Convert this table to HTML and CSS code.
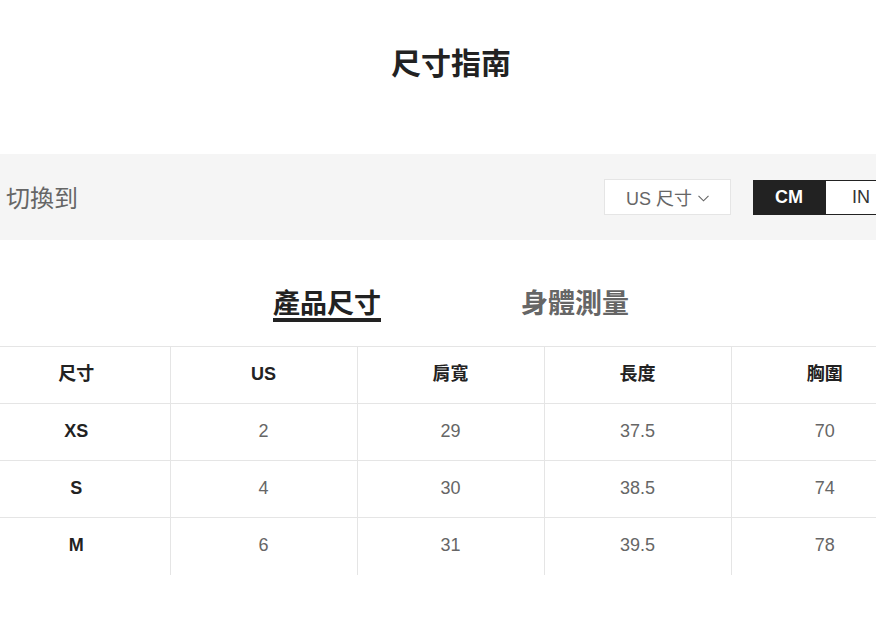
FILE: index.html
```html
<!DOCTYPE html>
<html lang="zh-Hant">
<head>
<meta charset="utf-8">
<title>尺寸指南</title>
<link rel="stylesheet" href="styles.css">
</head>
<body>
<div class="page">
  <h1 class="title">尺寸指南</h1>
  <div class="switch-bar">
    <span class="switch-label">切換到</span>
    <div class="switch-controls">
      <div class="dropdown">US 尺寸<svg class="chev" width="11" height="7" viewBox="0 0 11 7"><path d="M0.5 0.8 L5.5 5.8 L10.5 0.8" fill="none" stroke="#666" stroke-width="1.1"/></svg></div>
      <div class="units">
        <span class="unit active">CM</span>
        <span class="unit">IN</span>
      </div>
    </div>
  </div>
  <div class="tabs">
    <span class="tab active">產品尺寸</span>
    <span class="tab">身體測量</span>
  </div>
  <table class="size-table">
    <thead>
      <tr><th>尺寸</th><th>US</th><th>肩寬</th><th>長度</th><th>胸圍</th></tr>
    </thead>
    <tbody>
      <tr><td>XS</td><td>2</td><td>29</td><td>37.5</td><td>70</td></tr>
      <tr><td>S</td><td>4</td><td>30</td><td>38.5</td><td>74</td></tr>
      <tr><td>M</td><td>6</td><td>31</td><td>39.5</td><td>78</td></tr>
    </tbody>
  </table>
</div>
</body>
</html>
```
FILE: styles.css
```css
html, body {
  margin: 0;
  padding: 0;
  background: #fff;
  overflow: hidden;
}
body {
  font-family: "Liberation Sans", "Noto Sans CJK TC", Arial, sans-serif;
  color: #222;
}
.page {
  width: 902px;
}
.title {
  margin: 0;
  padding-top: 41px;
  font-family: "Noto Sans CJK TC", sans-serif;
  font-size: 30px;
  line-height: 40px;
  font-weight: 700;
  text-align: center;
  color: #222;
}
.switch-bar {
  margin-top: 73px;
  height: 86px;
  background: #f5f5f5;
  display: flex;
  align-items: center;
  justify-content: space-between;
  padding: 0 5px 0 6px;
}
.switch-label {
  font-family: "Noto Sans CJK TC", sans-serif;
  font-size: 24px;
  color: #666;
  line-height: 30px;
}
.switch-controls {
  display: flex;
  align-items: center;
  gap: 22px;
}
.dropdown {
  box-sizing: border-box;
  width: 127px;
  height: 36px;
  background: #fff;
  border: 1px solid #e5e5e5;
  display: flex;
  align-items: center;
  justify-content: center;
  gap: 6px;
  font-size: 18px;
  color: #666;
  font-family: "Liberation Sans", "Noto Sans CJK TC", sans-serif;
}
.chev {
  margin-top: 3px;
}
.units {
  display: flex;
}
.unit {
  box-sizing: border-box;
  width: 72px;
  height: 35px;
  display: flex;
  align-items: center;
  justify-content: center;
  font-size: 18px;
  color: #333;
  background: #fff;
  border: 1px solid #222;
}
.unit.active {
  background: #222;
  color: #fff;
  font-weight: 700;
}
.tabs {
  margin-top: 46px;
  display: flex;
  justify-content: center;
  gap: 140px;
}
.tab {
  font-family: "Noto Sans CJK TC", sans-serif;
  font-size: 27px;
  font-weight: 700;
  line-height: 32px;
  color: #666;
  border-bottom: 4px solid transparent;
}
.tab.active {
  color: #222;
  border-bottom-color: #222;
}
.size-table {
  margin-top: 24px;
  margin-left: -17px;
  width: 935px;
  border-collapse: collapse;
  table-layout: fixed;
}
.size-table th,
.size-table td {
  box-sizing: border-box;
  height: 57px;
  padding: 0 0 2px;
  line-height: 20px;
  text-align: center;
  vertical-align: middle;
  border-top: 1px solid #e5e5e5;
  border-left: 1px solid #e5e5e5;
  font-size: 18px;
}
.size-table th:first-child,
.size-table td:first-child {
  border-left: none;
}
.size-table th {
  font-weight: 700;
  color: #222;
  font-family: "Liberation Sans", "Noto Sans CJK TC", sans-serif;
}
.size-table td {
  color: #666;
}
.size-table td:first-child {
  font-weight: 700;
  color: #222;
}
```
